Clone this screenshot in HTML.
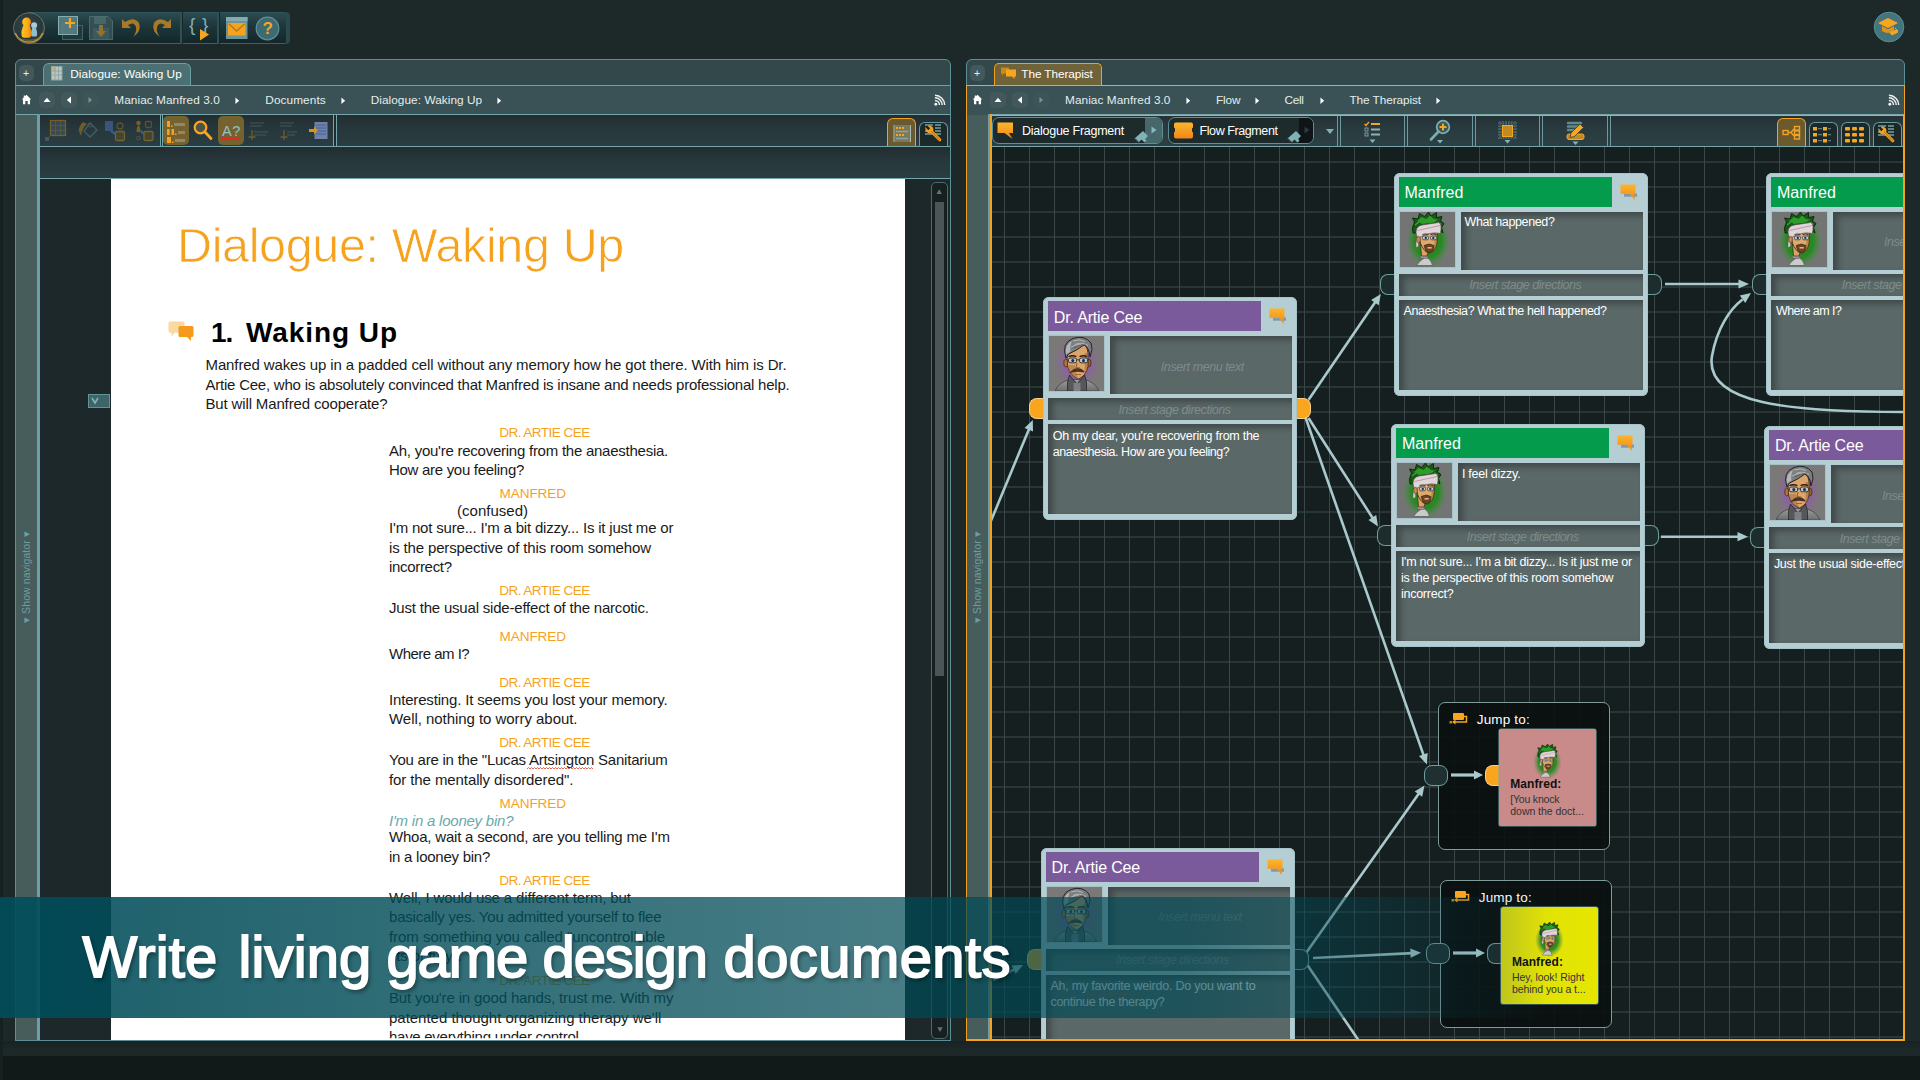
<!DOCTYPE html>
<html lang="en"><head><meta charset="utf-8"><title>Write living game design documents</title>
<style>

html,body{margin:0;padding:0}
body{width:1920px;height:1080px;overflow:hidden;position:relative;background:#1d2829;font-family:"Liberation Sans",sans-serif;}
.t{position:absolute;white-space:pre;}
.abs{position:absolute}
svg{position:absolute;overflow:visible}
.panel{position:absolute;background:#33484b;border:1px solid #5a9096;border-radius:6px 6px 0 0;box-sizing:border-box}
.crumb{position:absolute;background:#3a5254;}
.navstrip{position:absolute;background:#48605f;}
.tb{position:absolute;background:linear-gradient(#2b4347,#1f3235);box-sizing:border-box;border:1px solid #4b7d83;}
.sq{position:absolute;width:15px;height:15px;border-radius:5px;background:#42585b;}
.node{position:absolute;width:254px;height:223px;background:#b5ced3;border-radius:6px;box-shadow:0 0 0 1px #a6c3c8 inset}
.node .hd{position:absolute;left:5px;top:4px;width:213px;height:30px}
.node .pt{position:absolute;left:6px;top:39px;width:55px;height:55px;background:#727574;overflow:hidden;box-shadow:0 0 0 1px rgba(160,185,190,.6)}
.ib{position:absolute;background:#5b6868;box-shadow:inset 5px 4px 6px rgba(0,0,0,.3)}
.pin{position:absolute;width:14px;height:21px;box-sizing:border-box}
.pin.o{background:#f9a51e;border:1px solid #fbd08a}
.pin.d{background:#1d2c2d;border:1px solid #6d9ea0}
.pin.l{border-radius:8px 0 0 8px;border-right:none}
.pin.r{border-radius:0 8px 8px 0;border-left:none}
.jump{position:absolute;background:rgba(10,15,15,.9);border:1px solid #7e9a9b;border-radius:7px;box-sizing:border-box}

</style></head>
<body>
<div style="position:absolute;left:0px;top:1041px;width:1920px;height:15px;background:linear-gradient(#182223,#1d2829 60%)"></div>
<div style="position:absolute;left:0px;top:1056px;width:1920px;height:24px;background:#111919"></div>
<div style="position:absolute;left:0px;top:0px;width:3px;height:1080px;background:#172021"></div>
<div style="position:absolute;left:28px;top:12px;width:259px;height:32px;background:linear-gradient(#2c4c51,#1d363a 45%,#14272a);border-bottom:1px solid #3b6266;border-top:1px solid #33555a;box-sizing:border-box;border-radius:0 3px 3px 0"></div>
<div style="position:absolute;left:286px;top:12px;width:4px;height:32px;background:#2b4a4e;border-radius:0 4px 4px 0"></div>
<div style="position:absolute;left:180px;top:12px;width:2px;height:32px;background:#2f5156"></div>
<div style="position:absolute;left:182px;top:12px;width:1px;height:32px;background:#15272a"></div>
<div style="position:absolute;left:217px;top:12px;width:2px;height:32px;background:#2f5156"></div>
<div style="position:absolute;left:219px;top:12px;width:1px;height:32px;background:#15272a"></div>
<svg style="left:12px;top:11px" width="34" height="34" viewBox="0 0 34 34">
<defs><radialGradient id="lg" cx="45%" cy="40%" r="60%"><stop offset="0" stop-color="#34474a"/><stop offset=".75" stop-color="#27383b"/><stop offset="1" stop-color="#4a4631"/></radialGradient>
<linearGradient id="lo" x1="0" y1="0" x2="1" y2="0"><stop offset="0" stop-color="#ffc21c"/><stop offset=".55" stop-color="#fbb016"/><stop offset="1" stop-color="#ee8413"/></linearGradient></defs>
<circle cx="17" cy="17.200" r="15.500" fill="url(#lg)" stroke="#85897a" stroke-width=".9" stroke-opacity=".75"/>
<path d="M3.200 22 A15 15 0 0 0 30.800 22" fill="none" stroke="#d9a440" stroke-width="1.400" opacity=".9"/>
<path d="M6 27 Q17 33 28 27 Q17 30.500 6 27Z" fill="#b98a2e" opacity=".55"/>
<circle cx="22.100" cy="14.300" r="3" fill="#a6cbdc"/><path d="M20.500 16 Q18.600 21 19.200 24.500 Q19.500 25.600 20.500 25.600 L23.800 25.600 Q24.800 25.600 25 24.500 Q25.600 21 23.700 16 Z" fill="#94bccf"/>
<circle cx="14.600" cy="10.900" r="4.400" fill="url(#lo)"/><path d="M12 13 Q8.500 20 9.700 25 Q10 26.800 12 26.800 L16.800 26.800 Q18.800 26.800 19 25 Q20 20 17.200 13 Z" fill="url(#lo)"/>
</svg>
<svg style="left:57px;top:15px" width="28" height="26" viewBox="0 0 28 26">
<rect x="5.5" y="10.5" width="20" height="14" fill="#22393c" stroke="#3f6266"/>
<rect x="1" y="1" width="20" height="19" fill="#5d8487" opacity=".85"/><rect x="1.5" y="1.5" width="19" height="18" fill="none" stroke="#86aeb0"/>
<path d="M13 3 V13 M8 8 H18" stroke="#f8a51f" stroke-width="2.2"/></svg>
<svg style="left:88px;top:15px" width="26" height="26" viewBox="0 0 26 26" opacity=".8">
<path d="M1.5 1.5 H20 L24.5 6 V24.5 H1.5 Z" fill="#3a5558" stroke="#54777a"/>
<rect x="6" y="2" width="12" height="7" fill="#4f7073"/><rect x="5" y="13" width="16" height="11" fill="#456568"/>
<path d="M11 10 h4 v6 h3 l-5 6 l-5 -6 h3 z" fill="#b5802a"/></svg>
<svg style="left:120px;top:17px" width="22" height="22" viewBox="0 0 22 22">
<path d="M2 2 V11 H11 L8 8 Q14 4 16 10 Q17 15 13 20 Q22 14 19 6 Q14 -1 5 5 Z" fill="#a87a28"/></svg>
<svg style="left:151px;top:17px" width="22" height="22" viewBox="0 0 22 22">
<path d="M20 2 V11 H11 L14 8 Q8 4 6 10 Q5 15 9 20 Q0 14 3 6 Q8 -1 17 5 Z" fill="#a87a28"/></svg>
<div class="t " style="left:189px;top:15.42px;line-height:19px;font-size:19px;color:#7fb0b3;letter-spacing:0.672px;">{ }</div>
<svg style="left:199px;top:29px" width="11" height="12" viewBox="0 0 11 12"><path d="M1 0 L10 5.5 L1 11.5 Z" fill="#f8a51f"/></svg>
<svg style="left:226px;top:17px" width="22" height="23" viewBox="0 0 22 23">
<rect x="0" y="0" width="21.5" height="22" fill="#6b9598"/><rect x="0" y="0" width="21.5" height="4" fill="#83acae"/>
<rect x="2" y="6" width="17.5" height="12.5" fill="#f5a31f"/><path d="M3 7 L10.7 14 L18.5 7" fill="none" stroke="#b37818" stroke-width="1.3"/></svg>
<svg style="left:255px;top:16px" width="25" height="25" viewBox="0 0 25 25"><circle cx="12.5" cy="12.5" r="11.3" fill="#3e6a72" stroke="#5f9197" stroke-width="1.2"/></svg>
<div class="t " style="left:262.5px;top:19.61px;line-height:17px;font-size:17px;font-weight:bold;color:#f8a51f;">?</div>
<svg style="left:1873px;top:11px" width="32" height="32" viewBox="0 0 32 32"><circle cx="16" cy="16" r="14.8" fill="#45747c" stroke="#5d8f97" stroke-width="1"/>
<path d="M5 12 L15 7 L25 12 L15 17 Z" fill="#f8a51f"/><path d="M9 15 V20 Q15 24 21 20 V15 L15 18.2 Z" fill="#e0931a"/>
<path d="M17 22 l6 -3 l2 2 l-6 3 z M22 17 l3 3" fill="#f8a51f" stroke="#f8a51f"/></svg>
<div class="panel" style="left:15px;top:59px;width:936px;height:982px"></div>
<div class="sq" style="left:19px;top:65px;width:15px;height:16px"></div>
<div class="t " style="left:23px;top:67.61px;line-height:10.5px;font-size:10.5px;color:#e8f0f0;">+</div>
<div style="position:absolute;left:43px;top:63px;width:148px;height:23px;background:#4b6f72;border:1px solid #6a9fa3;border-bottom:none;border-radius:6px 6px 0 0;box-sizing:border-box"></div>
<svg style="left:51px;top:66px" width="12" height="15" viewBox="0 0 12 15"><rect x="0.5" y="0.5" width="10.5" height="13.5" fill="#b9c8c4" stroke="#8fa5a2"/><rect x="1.5" y="1.5" width="3" height="3" fill="#f8a51f"/><path d="M4 1 V14 M7.5 1 V14 M1 5 H11 M1 9 H11" stroke="#8aa09c" stroke-width=".8"/></svg>
<div class="t " style="left:70.3px;top:69.01px;line-height:11.8px;font-size:11.8px;color:#fff;letter-spacing:0.058px;">Dialogue: Waking Up</div>
<div style="position:absolute;left:16px;top:85px;width:934px;height:30px;background:#3a5255;border-top:1px solid #6ea0a5;border-bottom:1px solid #76a5aa;box-sizing:border-box"></div>
<svg style="left:20.5px;top:94px" width="11" height="11" viewBox="0 0 14 14"><path d="M7 1 L13 7 H11.5 V13 H8.5 V9 H5.5 V13 H2.5 V7 H1 L3.5 4.5 V2 H5 V3 Z" fill="#fff"/></svg>
<div class="sq" style="left:39px;top:92px;width:16px;height:16px;opacity:1"></div>
<svg style="left:39px;top:92px" width="16" height="16" viewBox="0 0 16 16"><path d="M4.500 10 L8 5.800 L11.500 10 Z" fill="#fff" opacity="1"/></svg>
<div class="sq" style="left:61px;top:92px;width:16px;height:16px;opacity:1"></div>
<svg style="left:61px;top:92px" width="16" height="16" viewBox="0 0 16 16"><path d="M10 4.500 L5.800 8 L10 11.500 Z" fill="#fff" opacity="1"/></svg>
<div class="sq" style="left:82px;top:92px;width:16px;height:16px;opacity:0.5"></div>
<svg style="left:82px;top:92px" width="16" height="16" viewBox="0 0 16 16"><path d="M6.500 5 L10 8 L6.500 11 Z" fill="#fff" opacity="0.35"/></svg>
<div class="t " style="left:114.3px;top:95.01px;line-height:11.8px;font-size:11.8px;color:#e4eeee;letter-spacing:0.069px;">Maniac Manfred 3.0</div>
<svg style="left:234.8px;top:96.800px" width="5" height="7.400" viewBox="0 0 6 9"><path d="M0.5 0.5 L5 4.5 L0.5 8.5 Z" fill="#fff"/></svg>
<div class="t " style="left:265.3px;top:95.01px;line-height:11.8px;font-size:11.8px;color:#e4eeee;letter-spacing:0.092px;">Documents</div>
<svg style="left:340.8px;top:96.800px" width="5" height="7.400" viewBox="0 0 6 9"><path d="M0.5 0.5 L5 4.5 L0.5 8.5 Z" fill="#fff"/></svg>
<div class="t " style="left:370.7px;top:95.01px;line-height:11.8px;font-size:11.8px;color:#e4eeee;letter-spacing:0.058px;">Dialogue: Waking Up</div>
<svg style="left:496.8px;top:96.800px" width="5" height="7.400" viewBox="0 0 6 9"><path d="M0.5 0.5 L5 4.5 L0.5 8.5 Z" fill="#fff"/></svg>
<svg style="left:933.5px;top:94.5px" width="11" height="11" viewBox="0 0 12 12" opacity=".92"><circle cx="2" cy="10" r="1.6" fill="#fff"/><path d="M1 6 A5 5 0 0 1 6 11 M1 3 A8 8 0 0 1 9 11 M1 0.3 A10.7 10.7 0 0 1 11.7 11" fill="none" stroke="#fff" stroke-width="1.6"/></svg>
<div style="position:absolute;left:16px;top:115px;width:21px;height:925px;background:#465d5c"></div>
<div style="position:absolute;left:36.5px;top:114px;width:3px;height:926px;background:#6c9dab"></div>
<div class="t " style="left:20.5px;top:623.11px;line-height:10.5px;font-size:10.5px;color:#6d9ca3;letter-spacing:0.099px;transform-origin:0 0;transform:rotate(-90deg);">▾ Show navigator ▾</div>
<div style="position:absolute;left:40px;top:115px;width:910px;height:32px;background:linear-gradient(#222d31,#27383c 45%,#2a3d42)"></div>
<div style="position:absolute;left:160px;top:115px;width:1px;height:31px;background:#76a5aa"></div>
<div style="position:absolute;left:162px;top:115px;width:1px;height:31px;background:#76a5aa"></div>
<div style="position:absolute;left:333px;top:115px;width:1px;height:31px;background:#76a5aa"></div>
<div style="position:absolute;left:336px;top:115px;width:1px;height:31px;background:#76a5aa"></div>
<div style="position:absolute;left:161px;top:115px;width:1px;height:32px;background:#1d2c2e"></div>
<div style="position:absolute;left:334px;top:115px;width:2px;height:32px;background:#1d2c2e"></div>
<svg style="left:44px;top:118px" width="114" height="26" viewBox="0 0 114 26" opacity=".55">
<rect x="6.500" y="2.500" width="15" height="15" fill="#4a5a62" stroke="#b5831f" stroke-width="1.300"/><path d="M11.500 3 V17 M16.500 3 V17 M7 7.500 H21 M7 12.500 H21" stroke="#7a7a55" stroke-width=".8"/><rect x="1" y="19" width="4" height="4" fill="#5d7376"/><path d="M5 19 L7 17" stroke="#5d7376"/>
<g transform="translate(-3 0)"><path d="M42 4 Q35 10 40 18 Q41 10 46 6 Z" fill="#a8792a"/><path d="M49 5 L56 12 L49 19 L43 13 Z" fill="none" stroke="#5d7b80" stroke-width="1.400"/><circle cx="49" cy="7" r="2" fill="none" stroke="#5d7b80"/></g>
<g transform="translate(-5 0)"><rect x="66" y="3" width="8" height="10" fill="#4d6fae"/><circle cx="81" cy="8" r="3" fill="none" stroke="#8a6a2a" stroke-width="1.300"/><path d="M72 13 L78 17" stroke="#4d78b0" stroke-width="2.500"/><rect x="76.500" y="13.500" width="9" height="9" rx="1.500" fill="#5a4f2a" stroke="#b5831f" stroke-width="1.300"/></g>
<g transform="translate(-7.500 0)"><circle cx="102" cy="5" r="2.300" fill="#b5831f"/><path d="M100 14 Q100 9 102 7 Q104 9 104 14 Z" fill="#b5831f"/><rect x="109" y="3.500" width="6" height="6" rx="1.500" fill="none" stroke="#8a6a2a" stroke-width="1.300"/><path d="M104 13 L108 16" stroke="#4d78b0" stroke-width="2.500"/><rect x="107.500" y="13.500" width="9" height="9" rx="1.500" fill="#5a4f2a" stroke="#b5831f" stroke-width="1.300"/><circle cx="102" cy="20" r="1.800" fill="none" stroke="#8a6a2a"/></g>
</svg>
<div style="position:absolute;left:163px;top:116px;width:26px;height:29px;background:#76622f;border-radius:5px"></div>
<div style="position:absolute;left:218px;top:116px;width:26px;height:29px;background:#76622f;border-radius:5px"></div>
<svg style="left:163px;top:116px" width="172" height="29" viewBox="0 0 172 29">
<g fill="#f3a21f"><rect x="4" y="5" width="3" height="6"/><rect x="4" y="13" width="2.600" height="6"/><rect x="8.500" y="13" width="2.600" height="6"/><rect x="4" y="21" width="4" height="6"/><rect x="8" y="9.500" width="1.500" height="1.500"/><rect x="12" y="17.500" width="1.500" height="1.500"/><rect x="9" y="25.500" width="1.500" height="1.500"/></g>
<g fill="#8d8a6a"><rect x="11" y="7" width="11" height="3"/><rect x="15" y="15" width="7" height="3"/><rect x="12" y="23" width="10" height="3"/></g>
<circle cx="37.500" cy="11.500" r="5.800" fill="#4a5548" stroke="#f8a51f" stroke-width="2.200"/><path d="M42 16 L48 22.500" stroke="#f8a51f" stroke-width="2.800" stroke-linecap="round"/>
<path d="M58 23.500 l2 -1.600 l2 1.600 l2 -1.600 l2 1.600 l2 -1.600 l2 1.600 l2 -1.600 l2 1.600 l2 -1.600" fill="none" stroke="#e02626" stroke-width="1.700"/>
<g opacity=".55"><path d="M87 7 h14 M87 10 h12 M91 16 h14 M91 19 h12" stroke="#5d7479" stroke-width="1.200"/><path d="M89 14 V24 M85.500 21 H92.500" stroke="#a87a28" stroke-width="1.300"/></g>
<g opacity=".55"><path d="M117 7 h14 M117 10 h12 M124 16 h10 M124 19 h8" stroke="#5d7479" stroke-width="1.200"/><path d="M121 14 V24 M117.500 21 H124.500" stroke="#a87a28" stroke-width="1.300"/></g>
<rect x="151.500" y="6" width="13" height="17" fill="#7b8fbf" opacity=".85"/><path d="M153 9 h10 M153 12 h10 M153 15 h10 M153 18 h10" stroke="#4a5f96" stroke-width="1"/><path d="M146 13 h5 v-2.500 l4 4 l-4 4 v-2.500 h-5 z" fill="#d8921f"/>
</svg>
<div class="t " style="left:222px;top:124.23px;line-height:14.5px;font-size:14.5px;color:#8fc0c6;letter-spacing:0.625px;">A?</div>
<div style="position:absolute;left:887px;top:118px;width:29px;height:29px;background:#6b5a2e;border:1.500px solid #f5a11f;border-bottom:none;border-radius:6px 6px 0 0;box-sizing:border-box"></div>
<div style="position:absolute;left:919px;top:122px;width:29px;height:25px;background:#1b292b;border:1px solid #6a9a9e;border-bottom:none;border-radius:6px 6px 0 0;box-sizing:border-box"></div>
<svg style="left:887px;top:118px" width="62" height="29" viewBox="0 0 62 29">
<rect x="7.500" y="7" width="16" height="17" fill="#7d8672" opacity=".7"/><path d="M7 7 V24 M23.500 7 V24" stroke="#aab8b0" stroke-width="1"/><path d="M9 10 h9 M9 17 h8" stroke="#f8a51f" stroke-width="1.800" stroke-dasharray="2 1"/><path d="M9 13.500 h12 M9 20.500 h12" stroke="#8fa5a2" stroke-width="1.300"/>
<path d="M38 7 h8 M48 7 h6 M38 10 h8 M48 10 h6 M38 13 h8 M48 13 h6 M38 16 h8 M48 16 h6" stroke="#7b9ea2" stroke-width="1.300"/><g transform="translate(42.500,11.500) rotate(-45)"><rect x="-1.500" y="1" width="3" height="15" rx="1.300" fill="#f0a020"/><circle r="3.700" fill="#f3a21f"/><rect x="-1.300" y="-4.500" width="2.600" height="4.200" fill="#1b292b"/><rect x="-.5" y="2" width="1" height="13" fill="#c07a10"/></g>
</svg>
<div style="position:absolute;left:40px;top:146px;width:910px;height:1px;background:#76a5aa"></div>
<div style="position:absolute;left:40px;top:147px;width:910px;height:31px;background:linear-gradient(#222d31,#27383c 45%,#2a3d41)"></div>
<div style="position:absolute;left:40px;top:178px;width:910px;height:1px;background:#76a5aa"></div>
<div style="position:absolute;left:40px;top:179px;width:910px;height:861px;background:#1c2829"></div>
<div style="position:absolute;left:111px;top:179px;width:794px;height:861px;background:#fff"></div>
<div style="position:absolute;left:88px;top:394px;width:22px;height:14px;background:#3d6468;border:1px solid #5f9499;box-sizing:border-box"></div>
<svg style="left:91px;top:397px" width="8" height="8" viewBox="0 0 8 8"><path d="M1 1 L4 6 L7 1" fill="none" stroke="#7fb5ba" stroke-width="1.600"/></svg>
<div style="position:absolute;left:931px;top:182px;width:17px;height:856.5px;background:#162021;border:1px solid #4e6a6c;border-radius:5px;box-sizing:border-box"></div>
<div style="position:absolute;left:935px;top:202px;width:9px;height:474px;background:#4b5557"></div>
<svg style="left:936.300px;top:188.500px" width="6.400" height="5.400" viewBox="0 0 9 8"><path d="M0.500 7.500 L4.500 0.500 L8.500 7.500 Z" fill="#687274"/></svg>
<svg style="left:936.500px;top:1026.500px" width="6" height="5.400" viewBox="0 0 9 8"><path d="M0.500 0.500 L4.500 7.500 L8.500 0.500 Z" fill="#687274"/></svg>
<div class="t " style="left:177px;top:221.44px;line-height:48.5px;font-size:48.5px;color:#f5a21f;letter-spacing:-0.358px;-webkit-text-stroke:.75px #fff;">Dialogue: Waking Up</div>
<svg style="left:168px;top:320px" width="28" height="22" viewBox="0 0 28 22"><path d="M2 1.500 h13 a1.500 1.500 0 0 1 1.500 1.500 v8 a1.500 1.500 0 0 1 -1.500 1.500 h-8 l-3.500 4 v-4 h-1.500 a1.500 1.500 0 0 1 -1.500 -1.500 v-8 a1.500 1.500 0 0 1 1.500 -1.500z" fill="#f9d9a0"/><path d="M12 6 h12 a1.500 1.500 0 0 1 1.500 1.500 v8 a1.500 1.500 0 0 1 -1.500 1.500 h-1 v4 l-4 -4 h-7 a1.500 1.500 0 0 1 -1.500 -1.500 v-8 a1.500 1.500 0 0 1 1.500 -1.500z" fill="#f59a1c"/></svg>
<div class="t " style="left:211px;top:318.80px;line-height:28px;font-size:28px;font-weight:bold;color:#000;letter-spacing:-1.180px;">1.</div>
<div class="t " style="left:246px;top:318.80px;line-height:28px;font-size:28px;font-weight:bold;color:#000;letter-spacing:0.931px;">Waking Up</div>
<div class="t " style="left:205.5px;top:357.30px;line-height:15px;font-size:15px;color:#1a1a1a;letter-spacing:-0.118px;">Manfred wakes up in a padded cell without any memory how he got there. With him is Dr.</div>
<div class="t " style="left:205.5px;top:376.80px;line-height:15px;font-size:15px;color:#1a1a1a;letter-spacing:-0.228px;">Artie Cee, who is absolutely convinced that Manfred is insane and needs professional help.</div>
<div class="t " style="left:205.5px;top:396.30px;line-height:15px;font-size:15px;color:#1a1a1a;letter-spacing:-0.146px;">But will Manfred cooperate?</div>
<div class="t " style="left:499.2px;top:426.49px;line-height:13.6px;font-size:13.6px;color:#f5a21f;letter-spacing:-0.573px;">DR. ARTIE CEE</div>
<div class="t " style="left:389px;top:442.60px;line-height:15px;font-size:15px;color:#1a1a1a;letter-spacing:-0.249px;">Ah, you're recovering from the anaesthesia.</div>
<div class="t " style="left:389px;top:462.00px;line-height:15px;font-size:15px;color:#1a1a1a;letter-spacing:-0.296px;">How are you feeling?</div>
<div class="t " style="left:499.5px;top:486.79px;line-height:13.6px;font-size:13.6px;color:#f5a21f;letter-spacing:-0.103px;">MANFRED</div>
<div class="t " style="left:457px;top:503.10px;line-height:15px;font-size:15px;color:#1a1a1a;letter-spacing:0.013px;">(confused)</div>
<div class="t " style="left:389px;top:520.30px;line-height:15px;font-size:15px;color:#1a1a1a;letter-spacing:-0.188px;">I'm not sure... I'm a bit dizzy... Is it just me or</div>
<div class="t " style="left:389px;top:539.80px;line-height:15px;font-size:15px;color:#1a1a1a;letter-spacing:-0.149px;">is the perspective of this room somehow</div>
<div class="t " style="left:389px;top:559.00px;line-height:15px;font-size:15px;color:#1a1a1a;letter-spacing:-0.316px;">incorrect?</div>
<div class="t " style="left:499.2px;top:584.29px;line-height:13.6px;font-size:13.6px;color:#f5a21f;letter-spacing:-0.573px;">DR. ARTIE CEE</div>
<div class="t " style="left:389px;top:600.30px;line-height:15px;font-size:15px;color:#1a1a1a;letter-spacing:-0.198px;">Just the usual side-effect of the narcotic.</div>
<div class="t " style="left:499.5px;top:630.19px;line-height:13.6px;font-size:13.6px;color:#f5a21f;letter-spacing:-0.103px;">MANFRED</div>
<div class="t " style="left:389px;top:645.60px;line-height:15px;font-size:15px;color:#1a1a1a;letter-spacing:-0.516px;">Where am I?</div>
<div class="t " style="left:499.2px;top:675.99px;line-height:13.6px;font-size:13.6px;color:#f5a21f;letter-spacing:-0.573px;">DR. ARTIE CEE</div>
<div class="t " style="left:389px;top:692.30px;line-height:15px;font-size:15px;color:#1a1a1a;letter-spacing:-0.167px;">Interesting. It seems you lost your memory.</div>
<div class="t " style="left:389px;top:711.00px;line-height:15px;font-size:15px;color:#1a1a1a;letter-spacing:-0.046px;">Well, nothing to worry about.</div>
<div class="t " style="left:499.2px;top:736.29px;line-height:13.6px;font-size:13.6px;color:#f5a21f;letter-spacing:-0.573px;">DR. ARTIE CEE</div>
<div class="t " style="left:389px;top:752.00px;line-height:15px;font-size:15px;color:#1a1a1a;letter-spacing:-0.227px;">You are in the "Lucas Artsington Sanitarium</div>
<svg style="left:527px;top:767px" width="68" height="3" viewBox="0 0 68 3"><path d="M0 2 l1.500 -1.500 l1.500 1.500 l1.500 -1.500 l1.500 1.500 l1.500 -1.500 l1.500 1.500 l1.500 -1.500 l1.500 1.500 l1.500 -1.500 l1.500 1.500 l1.500 -1.500 l1.500 1.500 l1.500 -1.500 l1.500 1.500 l1.500 -1.500 l1.500 1.500 l1.500 -1.500 l1.500 1.500 l1.500 -1.500 l1.500 1.500 l1.500 -1.500 l1.500 1.500 l1.500 -1.500 l1.500 1.500 l1.500 -1.500 l1.500 1.500 l1.500 -1.500 l1.500 1.500 l1.500 -1.500 l1.500 1.500 l1.500 -1.500 l1.500 1.500 l1.500 -1.500 l1.500 1.500 l1.500 -1.500 l1.500 1.500 l1.500 -1.500 l1.500 1.500 l1.500 -1.500 l1.500 1.500 l1.500 -1.500 l1.500 1.500 l1.500 -1.500 l1.500 1.500" fill="none" stroke="#e0402a" stroke-width=".8"/></svg>
<div class="t " style="left:389px;top:771.50px;line-height:15px;font-size:15px;color:#1a1a1a;letter-spacing:-0.096px;">for the mentally disordered".</div>
<div class="t " style="left:499.5px;top:796.79px;line-height:13.6px;font-size:13.6px;color:#f5a21f;letter-spacing:-0.103px;">MANFRED</div>
<div class="t " style="left:389px;top:812.60px;line-height:15px;font-size:15px;font-style:italic;color:#6aa9aa;letter-spacing:-0.224px;">I'm in a looney bin?</div>
<div class="t " style="left:389px;top:829.30px;line-height:15px;font-size:15px;color:#1a1a1a;letter-spacing:-0.209px;">Whoa, wait a second, are you telling me I'm</div>
<div class="t " style="left:389px;top:848.60px;line-height:15px;font-size:15px;color:#1a1a1a;letter-spacing:-0.256px;">in a looney bin?</div>
<div class="t " style="left:499.2px;top:874.29px;line-height:13.6px;font-size:13.6px;color:#f5a21f;letter-spacing:-0.573px;">DR. ARTIE CEE</div>
<div class="t " style="left:389px;top:889.80px;line-height:15px;font-size:15px;color:#1a1a1a;letter-spacing:-0.135px;">Well, I would use a different term, but</div>
<div class="t " style="left:389px;top:909.00px;line-height:15px;font-size:15px;color:#1a1a1a;letter-spacing:-0.217px;">basically yes. You admitted yourself to flee</div>
<div class="t " style="left:389px;top:928.60px;line-height:15px;font-size:15px;color:#1a1a1a;letter-spacing:-0.048px;">from something you called "uncontrollable</div>
<div class="t " style="left:389px;top:948.00px;line-height:15px;font-size:15px;color:#1a1a1a;letter-spacing:-0.108px;">fits of fury".</div>
<div class="t " style="left:499.2px;top:974.29px;line-height:13.6px;font-size:13.6px;color:#f5a21f;letter-spacing:-0.573px;">DR. ARTIE CEE</div>
<div class="t " style="left:389px;top:989.80px;line-height:15px;font-size:15px;color:#1a1a1a;letter-spacing:-0.144px;">But you're in good hands, trust me. With my</div>
<div class="t " style="left:389px;top:1009.80px;line-height:15px;font-size:15px;color:#1a1a1a;letter-spacing:-0.019px;">patented thought organizing therapy we'll</div>
<div class="t " style="left:389px;top:1028.80px;line-height:15px;font-size:15px;color:#1a1a1a;letter-spacing:-0.277px;clip-path:inset(0 0 5.5px 0);">have everything under control.</div>
<div style="position:absolute;left:15px;top:1040px;width:936px;height:1px;background:#5a9096"></div>
<div class="panel" style="left:966px;top:59px;width:939px;height:982px"></div>
<div class="sq" style="left:970px;top:65px;width:15px;height:16px"></div>
<div class="t " style="left:974px;top:67.61px;line-height:10.5px;font-size:10.5px;color:#e8f0f0;">+</div>
<div style="position:absolute;left:994px;top:62.5px;width:107.5px;height:23.5px;background:#70633a;border:1.500px solid #f0a020;border-bottom:none;border-radius:5px 5px 0 0;box-sizing:border-box"></div>
<svg style="left:1000px;top:67px" width="17" height="13" viewBox="0 0 17 13"><path d="M1 0.500 h8 v6 h-5 l-2 2 v-2 h-1 z" fill="#c98a1c"/><path d="M6 2.500 h10 v7 h-1.500 v2.500 l-2.500 -2.500 h-6 z" fill="#f8a51f"/></svg>
<div class="t " style="left:1021.3px;top:69.31px;line-height:11.8px;font-size:11.8px;color:#fff;letter-spacing:-0.083px;">The Therapist</div>
<div style="position:absolute;left:966px;top:85px;width:939px;height:956px;border:1.500px solid #f5a21f;box-sizing:border-box;background:#3a5255"></div>
<svg style="left:971.5px;top:94px" width="11" height="11" viewBox="0 0 14 14"><path d="M7 1 L13 7 H11.5 V13 H8.5 V9 H5.5 V13 H2.5 V7 H1 L3.5 4.5 V2 H5 V3 Z" fill="#fff"/></svg>
<div class="sq" style="left:990px;top:92px;width:16px;height:16px;opacity:1"></div>
<svg style="left:990px;top:92px" width="16" height="16" viewBox="0 0 16 16"><path d="M4.500 10 L8 5.800 L11.500 10 Z" fill="#fff" opacity="1"/></svg>
<div class="sq" style="left:1012px;top:92px;width:16px;height:16px;opacity:1"></div>
<svg style="left:1012px;top:92px" width="16" height="16" viewBox="0 0 16 16"><path d="M10 4.500 L5.800 8 L10 11.500 Z" fill="#fff" opacity="1"/></svg>
<div class="sq" style="left:1033px;top:92px;width:16px;height:16px;opacity:0.5"></div>
<svg style="left:1033px;top:92px" width="16" height="16" viewBox="0 0 16 16"><path d="M6.500 5 L10 8 L6.500 11 Z" fill="#fff" opacity="0.35"/></svg>
<div class="t " style="left:1065px;top:95.01px;line-height:11.8px;font-size:11.8px;color:#e4eeee;letter-spacing:0.069px;">Maniac Manfred 3.0</div>
<svg style="left:1185.8px;top:96.800px" width="5" height="7.400" viewBox="0 0 6 9"><path d="M0.5 0.5 L5 4.5 L0.5 8.5 Z" fill="#fff"/></svg>
<div class="t " style="left:1216px;top:95.01px;line-height:11.8px;font-size:11.8px;color:#e4eeee;letter-spacing:-0.105px;">Flow</div>
<svg style="left:1255.3px;top:96.800px" width="5" height="7.400" viewBox="0 0 6 9"><path d="M0.5 0.5 L5 4.5 L0.5 8.5 Z" fill="#fff"/></svg>
<div class="t " style="left:1284.5px;top:95.01px;line-height:11.8px;font-size:11.8px;color:#e4eeee;letter-spacing:-0.332px;">Cell</div>
<svg style="left:1319.8px;top:96.800px" width="5" height="7.400" viewBox="0 0 6 9"><path d="M0.5 0.5 L5 4.5 L0.5 8.5 Z" fill="#fff"/></svg>
<div class="t " style="left:1349.5px;top:95.01px;line-height:11.8px;font-size:11.8px;color:#e4eeee;letter-spacing:-0.083px;">The Therapist</div>
<svg style="left:1436.3px;top:96.800px" width="5" height="7.400" viewBox="0 0 6 9"><path d="M0.5 0.5 L5 4.5 L0.5 8.5 Z" fill="#fff"/></svg>
<svg style="left:1887.5px;top:94.5px" width="11" height="11" viewBox="0 0 12 12" opacity=".92"><circle cx="2" cy="10" r="1.6" fill="#fff"/><path d="M1 6 A5 5 0 0 1 6 11 M1 3 A8 8 0 0 1 9 11 M1 0.3 A10.7 10.7 0 0 1 11.7 11" fill="none" stroke="#fff" stroke-width="1.6"/></svg>
<div style="position:absolute;left:967px;top:115px;width:21px;height:925px;background:#465d5c"></div>
<div style="position:absolute;left:987.5px;top:114px;width:3px;height:926px;background:#6c9dab"></div>
<div class="t " style="left:971.5px;top:623.11px;line-height:10.5px;font-size:10.5px;color:#6d9ca3;letter-spacing:0.099px;transform-origin:0 0;transform:rotate(-90deg);">▾ Show navigator ▾</div>
<div style="position:absolute;left:990px;top:114px;width:914px;height:33px;background:linear-gradient(#232f33,#293b3f 45%,#2c4044)"></div>
<div style="position:absolute;left:990px;top:116px;width:348px;height:31px;border:1px solid #6b9ba0;border-top:none;box-sizing:border-box"></div>
<div style="position:absolute;left:1340px;top:116px;width:65px;height:31px;border:1px solid #6b9ba0;border-top:none;box-sizing:border-box"></div>
<div style="position:absolute;left:1407px;top:116px;width:66px;height:31px;border:1px solid #6b9ba0;border-top:none;box-sizing:border-box"></div>
<div style="position:absolute;left:1475px;top:116px;width:65px;height:31px;border:1px solid #6b9ba0;border-top:none;box-sizing:border-box"></div>
<div style="position:absolute;left:1542px;top:116px;width:66px;height:31px;border:1px solid #6b9ba0;border-top:none;box-sizing:border-box"></div>
<div style="position:absolute;left:1610px;top:116px;width:294px;height:31px;border:1px solid #6b9ba0;border-top:none;box-sizing:border-box;border-right:none"></div>
<div style="position:absolute;left:992px;top:117px;width:171px;height:27px;background:#1d2b2d;border:1px solid #5d8e93;border-radius:7px;box-sizing:border-box;overflow:hidden"><div style="position:absolute;right:0;top:0;width:17px;height:27px;background:#46686b"></div></div>
<div style="position:absolute;left:1168px;top:117px;width:146px;height:27px;background:#1d2b2d;border:1px solid #5d8e93;border-radius:7px;box-sizing:border-box;overflow:hidden"><div style="position:absolute;right:0;top:0;width:14px;height:27px;background:#0f1516"></div></div>
<svg style="left:997px;top:122px" width="17" height="18" viewBox="0 0 17 18"><defs><linearGradient id="og" x1="0" y1="0" x2="0" y2="1"><stop offset="0" stop-color="#fcb62c"/><stop offset="1" stop-color="#f0861a"/></linearGradient></defs><path d="M0.500 0.500 h15.500 v10.500 h-4 l3.500 6 l-8 -6 h-7 z" fill="url(#og)"/></svg>
<svg style="left:1173px;top:122px" width="21" height="17" viewBox="0 0 21 17"><path d="M3 0.500 h15 a2 2 0 0 1 2 2 v3 l-1 1 v3 l1 1 v4 a2 2 0 0 1 -2 2 h-15 a2 2 0 0 1 -2 -2 v-4 l1 -1 v-3 l-1 -1 v-3 a2 2 0 0 1 2 -2z" fill="url(#og)"/></svg>
<div class="t " style="left:1022px;top:125.22px;line-height:12.5px;font-size:12.5px;color:#fff;letter-spacing:-0.254px;">Dialogue Fragment</div>
<div class="t " style="left:1199.5px;top:125.22px;line-height:12.5px;font-size:12.5px;color:#fff;letter-spacing:-0.412px;">Flow Fragment</div>
<svg style="left:1134px;top:128.500px" width="16" height="17" viewBox="0 0 16 17"><path d="M9 2 l5 5 l-3 3 l1.500 1.500 l-2 2 l-3 -3 l-3 3 l-4 -4 z" fill="#7fb3b8"/><path d="M1 10 l4 4" stroke="#2a3f42" stroke-width="1.200"/></svg>
<svg style="left:1287px;top:128.500px" width="16" height="17" viewBox="0 0 16 17"><path d="M9 2 l5 5 l-3 3 l1.500 1.500 l-2 2 l-3 -3 l-3 3 l-4 -4 z" fill="#7fb3b8"/><path d="M1 10 l4 4" stroke="#2a3f42" stroke-width="1.200"/></svg>
<svg style="left:1151px;top:126px" width="6" height="8" viewBox="0 0 6 8"><path d="M0.500 0.500 L5.500 4 L0.500 7.500 Z" fill="#86b9be"/></svg>
<svg style="left:1304px;top:126px" width="6" height="8" viewBox="0 0 6 8"><path d="M0.500 0.500 L5.500 4 L0.500 7.500 Z" fill="#2c3a3b"/></svg>
<svg style="left:1326px;top:129px" width="8" height="5" viewBox="0 0 8 5"><path d="M0 0 H8 L4 5 Z" fill="#7fb3b8"/></svg>
<svg style="left:1362px;top:120px" width="22" height="26" viewBox="0 0 22 26">
<path d="M2.500 4 l1.500 1.500 l3 -3.500" fill="none" stroke="#f8a51f" stroke-width="1.300"/><path d="M9 4 h9" stroke="#f8a51f" stroke-width="2"/>
<rect x="3" y="8" width="3" height="3" fill="none" stroke="#8fb0b3" stroke-width=".8"/><rect x="3" y="13" width="3" height="3" fill="none" stroke="#8fb0b3" stroke-width=".8"/>
<path d="M9 9.500 h9 M9 14.500 h9" stroke="#8fb0b3" stroke-width="2"/><path d="M7.500 19.500 h6 l-3 3.500 z" fill="#7fb3b8"/></svg>
<svg style="left:1428px;top:118px" width="24" height="28" viewBox="0 0 24 28">
<circle cx="15" cy="9" r="6.300" fill="#3b5658" stroke="#79aeb3" stroke-width="1.800"/><path d="M10.500 13.500 L3 21.500" stroke="#79aeb3" stroke-width="2.600" stroke-linecap="round"/><path d="M15 5.500 V12.500 M11.500 9 H18.500" stroke="#f8a51f" stroke-width="2"/><path d="M9 22 h6 l-3 3.500 z" fill="#7fb3b8"/></svg>
<svg style="left:1497px;top:119px" width="22" height="27" viewBox="0 0 22 27">
<path d="M3 2 V20 M6 2 V20 M9 2 V20 M12 2 V20 M15 2 V20 M18 2 V20 M1 4 H20 M1 7 H20 M1 10 H20 M1 13 H20 M1 16 H20 M1 19 H20" stroke="#6fa0a5" stroke-width=".7" stroke-dasharray="1.500 1"/>
<rect x="5.500" y="6.500" width="10" height="11" fill="#c48a22" stroke="#f8a51f"/><path d="M7.500 21 h6 l-3 3.500 z" fill="#7fb3b8"/></svg>
<svg style="left:1563px;top:119px" width="26" height="28" viewBox="0 0 26 28">
<path d="M5 4 h13 M5 7.500 h13 M5 11 h10" stroke="#5f8a8e" stroke-width="2.400" stroke-linecap="round"/>
<rect x="4" y="15" width="17" height="5.500" rx="2" fill="#c48a22" stroke="#f8a51f"/>
<path d="M8 14 l9 -9 l3.500 3.500 l-9 9 l-4.500 1 z" fill="#f8a51f" stroke="#2e4346" stroke-width=".8"/><path d="M9.500 22.500 h6 l-3 3.500 z" fill="#7fb3b8"/></svg>
<div style="position:absolute;left:1777px;top:118px;width:29px;height:29px;background:#6b5a2e;border:1.500px solid #f5a11f;border-bottom:none;border-radius:6px 6px 0 0;box-sizing:border-box"></div>
<div style="position:absolute;left:1809px;top:122px;width:29px;height:25px;background:#1b292b;border:1px solid #6a9a9e;border-bottom:none;border-radius:6px 6px 0 0;box-sizing:border-box"></div>
<div style="position:absolute;left:1841px;top:122px;width:29px;height:25px;background:#1b292b;border:1px solid #6a9a9e;border-bottom:none;border-radius:6px 6px 0 0;box-sizing:border-box"></div>
<div style="position:absolute;left:1873px;top:122px;width:29px;height:25px;background:#1b292b;border:1px solid #6a9a9e;border-bottom:none;border-radius:6px 6px 0 0;box-sizing:border-box"></div>
<svg style="left:1777px;top:118px" width="126" height="29" viewBox="0 0 126 29">
<g fill="none" stroke="#f0a427" stroke-width="1.400"><rect x="6" y="12.500" width="5" height="4"/><path d="M11.500 14.500 h2.500 l3 -3.500 M14 14.500 l3 3.500"/><rect x="17.500" y="8.500" width="5" height="3.500"/><rect x="17.500" y="13" width="5" height="3.500"/><rect x="17.500" y="17.500" width="5" height="3.500"/></g>
<g fill="#f8a51f"><rect x="36" y="9" width="4" height="3.500"/><rect x="46" y="9" width="4" height="3.500"/><rect x="36" y="15" width="4" height="3.500"/><rect x="46" y="15" width="4" height="3.500"/><rect x="36" y="21" width="4" height="3.500"/><rect x="46" y="21" width="4" height="3.500"/>
<rect x="68" y="9" width="5" height="3.500" rx="1"/><rect x="75" y="9" width="5" height="3.500" rx="1"/><rect x="82" y="9" width="5" height="3.500" rx="1"/><rect x="68" y="15" width="5" height="3.500" rx="1"/><rect x="75" y="15" width="5" height="3.500" rx="1"/><rect x="82" y="15" width="5" height="3.500" rx="1"/><rect x="68" y="21" width="5" height="3.500" rx="1"/><rect x="75" y="21" width="5" height="3.500" rx="1"/><rect x="82" y="21" width="5" height="3.500" rx="1"/></g>
<path d="M41 10.700 h4 M51 10.700 h3 M41 16.700 h4 M51 16.700 h3 M41 22.700 h4 M51 22.700 h3" stroke="#6d9095" stroke-width="1"/>
<path d="M101 8 h8 M111 8 h6 M101 11 h8 M111 11 h6 M101 14 h8 M111 14 h6 M101 17 h8 M111 17 h6" stroke="#7b9ea2" stroke-width="1.300"/><g transform="translate(105.500,12.500) rotate(-45)"><rect x="-1.500" y="1" width="3" height="15" rx="1.300" fill="#f0a020"/><circle r="3.700" fill="#f3a21f"/><rect x="-1.300" y="-4.500" width="2.600" height="4.200" fill="#1b292b"/><rect x="-.5" y="2" width="1" height="13" fill="#c07a10"/></g>
</svg>
<div style="position:absolute;left:990px;top:146px;width:914px;height:1px;background:#76a5aa"></div>
<div style="position:absolute;left:990px;top:114px;width:914px;height:1px;background:#76a5aa"></div>
<div style="position:absolute;left:990px;top:115px;width:914px;height:1.4px;background:#f5a21f"></div>
<div style="position:absolute;left:992px;top:147px;width:911px;height:892px;overflow:hidden"><div style="position:absolute;left:0;top:0;width:911px;height:892px;background-color:#161f20;background-image:linear-gradient(90deg,#3a4647 1px,transparent 1px),linear-gradient(#2a3536 2px,transparent 2px);background-size:25px 25px;background-position:12px 0,0 14px"></div>
<div class="jump" style="left:446px;top:555px;width:172px;height:148px"></div><svg style="left:457px;top:565px" width="19" height="14" viewBox="0 0 19 14"><rect x="4" y="1" width="11" height="7" rx="1" fill="#f8a51f"/><path d="M15 4.500 h2.500 v5.500 h-12" fill="none" stroke="#f8a51f" stroke-width="1.500"/><path d="M6.500 7.500 L3 10 L6.500 12.500 Z" fill="#f8a51f"/><rect x="0.500" y="9" width="2.500" height="2.500" fill="#c98512"/></svg><div class="t " style="left:484.8px;top:565.57px;line-height:13.5px;font-size:13.5px;color:#fff;letter-spacing:0.152px;">Jump to:</div><div class="pin d" style="left:431.5px;top:617.5px;width:24px;height:21px;border-radius:8px;background:#1f3032"></div><div class="pin o l" style="left:493.29999999999995px;top:617.5px"></div><div style="position:absolute;left:507.29999999999995px;top:582px;width:96.500px;height:96.500px;background:#c98a8a;border-radius:2px;box-shadow:0 0 0 .6px rgba(120,170,170,.8)"><div style="position:absolute;left:31px;top:15px;width:34px;height:34px"><svg width="34.1" height="34.1" viewBox="0 0 55 55" style="left:0;top:0">
<defs><radialGradient id="mgj582" cx="50%" cy="50%" r="50%"><stop offset="0" stop-color="#1f8a1a"/><stop offset=".6" stop-color="#258a20" stop-opacity=".95"/><stop offset="1" stop-color="#5c8a55" stop-opacity="0"/></radialGradient></defs>
<ellipse cx="28" cy="29" rx="23" ry="28" fill="url(#mgj582)"/>
<path d="M16.500 53.500 Q20 48 24.500 46 L27.500 46 Q31.500 48 32.500 53.500 Z" fill="#cbcbcb" stroke="#4a4a4a" stroke-width=".6"/><rect x="20.500" y="43.300" width="7" height="3" rx="1.200" fill="#b497ad" stroke="#5a4a58" stroke-width=".5"/>
<path d="M20.500 32 L21.500 44 L27 44 L29 37 Z" fill="#dba268" stroke="#3a2410" stroke-width=".7"/>
<path d="M12.500 16 L14.500 10 L12.500 6 L18 7 L19.500 1.500 L24.500 4.500 L28.500 0 L31 4 L36.500 0.500 L36.500 5.500 L42 4.500 L40.500 9 L44 11.500 L41.500 15.500 L43 21 L37.500 17 L17 21 L13 21 Z" fill="#175a16" stroke="#092409" stroke-width=".9"/><path d="M17 9 L21.500 5 L26.500 7 L30 3.500 L34 7 L38 7.500 L34 10.500 L22 12 Z" fill="#2e9c29"/><path d="M15 13 L19 10 M37 10 L41 12" stroke="#37a832" stroke-width="1.200"/>
<path d="M19.500 20 Q19 30 22 34.500 Q25 40.500 30.500 41 Q35.500 39 37 31 L37.500 20 Z" fill="#dfa96c" stroke="#3a2410" stroke-width=".8"/>
<path d="M37 21 L37 31 Q36 36 33.500 39.500 Q35 30 34.500 21 Z" fill="#9a6430" opacity=".5"/>
<path d="M16 21 Q15.500 14.500 22 13 L38.500 10.500 Q41.500 11 41 17.500 L40.500 21.500 Q30 19 17.500 26.500 Z" fill="#dfd6da" stroke="#5a4a50" stroke-width=".7"/><path d="M17.500 18.500 L40 13.500" stroke="#b58a93" stroke-width=".8"/><path d="M16.300 26 l2.300 -.5 l0 9 l-2.800 1 z" fill="#d8cfd3" stroke="#5a4a50" stroke-width=".5"/>
<path d="M24 33.500 Q29.500 30.500 34 33.500 L33.500 38.500 Q30 42 26 39.800 Z" fill="#6b4325" stroke="#3a2410" stroke-width=".6"/><path d="M27.500 35.800 h4.200" stroke="#ecc193" stroke-width="1.400"/>
<rect x="22.500" y="24" width="6" height="3.800" rx="1.400" fill="#c4ced6" stroke="#3b3b3b" stroke-width=".8"/><rect x="30.500" y="24" width="6" height="3.800" rx="1.400" fill="#c4ced6" stroke="#3b3b3b" stroke-width=".8"/><circle cx="25.800" cy="26" r="1.150" fill="#22304a"/><circle cx="33.300" cy="26" r="1.150" fill="#22304a"/>
<path d="M22.500 22.500 Q25.500 21.300 28.500 22.500 M30.500 22.500 Q33.500 21.300 36.500 22.500" stroke="#3a2410" stroke-width=".9" fill="none"/>
<ellipse cx="18.500" cy="27.500" rx="1.900" ry="3.200" fill="#c48e55" stroke="#3a2410" stroke-width=".5"/>
</svg></div><div class="t " style="left:11px;top:49.14px;line-height:12px;font-size:12px;font-weight:bold;color:#111;letter-spacing:0.041px;">Manfred:</div><div class="t " style="left:11px;top:65.11px;line-height:10.5px;font-size:10.5px;color:#333;letter-spacing:-0.198px;">[You knock</div><div class="t " style="left:11px;top:76.81px;line-height:10.5px;font-size:10.5px;color:#333;letter-spacing:-0.040px;">down the doct...</div></div>
<div class="jump" style="left:448px;top:733px;width:172px;height:147.5px"></div><svg style="left:459px;top:743px" width="19" height="14" viewBox="0 0 19 14"><rect x="4" y="1" width="11" height="7" rx="1" fill="#f8a51f"/><path d="M15 4.500 h2.500 v5.500 h-12" fill="none" stroke="#f8a51f" stroke-width="1.500"/><path d="M6.500 7.500 L3 10 L6.500 12.500 Z" fill="#f8a51f"/><rect x="0.500" y="9" width="2.500" height="2.500" fill="#c98512"/></svg><div class="t " style="left:486.8px;top:743.57px;line-height:13.5px;font-size:13.5px;color:#fff;letter-spacing:0.152px;">Jump to:</div><div class="pin d" style="left:433.5px;top:795.5px;width:24px;height:21px;border-radius:8px;background:#1f3032"></div><div class="pin d l" style="left:495px;top:795.5px"></div><div style="position:absolute;left:509px;top:760px;width:96.500px;height:96.500px;background:linear-gradient(90deg,#d0d216,#e2e305 50%,#e6e600);border-radius:2px;box-shadow:0 0 0 .6px rgba(120,170,170,.8)"><div style="position:absolute;left:31px;top:15px;width:34px;height:34px"><svg width="34.1" height="34.1" viewBox="0 0 55 55" style="left:0;top:0">
<defs><radialGradient id="mgj760" cx="50%" cy="50%" r="50%"><stop offset="0" stop-color="#1f8a1a"/><stop offset=".6" stop-color="#258a20" stop-opacity=".95"/><stop offset="1" stop-color="#5c8a55" stop-opacity="0"/></radialGradient></defs>
<ellipse cx="28" cy="29" rx="23" ry="28" fill="url(#mgj760)"/>
<path d="M16.500 53.500 Q20 48 24.500 46 L27.500 46 Q31.500 48 32.500 53.500 Z" fill="#cbcbcb" stroke="#4a4a4a" stroke-width=".6"/><rect x="20.500" y="43.300" width="7" height="3" rx="1.200" fill="#b497ad" stroke="#5a4a58" stroke-width=".5"/>
<path d="M20.500 32 L21.500 44 L27 44 L29 37 Z" fill="#dba268" stroke="#3a2410" stroke-width=".7"/>
<path d="M12.500 16 L14.500 10 L12.500 6 L18 7 L19.500 1.500 L24.500 4.500 L28.500 0 L31 4 L36.500 0.500 L36.500 5.500 L42 4.500 L40.500 9 L44 11.500 L41.500 15.500 L43 21 L37.500 17 L17 21 L13 21 Z" fill="#175a16" stroke="#092409" stroke-width=".9"/><path d="M17 9 L21.500 5 L26.500 7 L30 3.500 L34 7 L38 7.500 L34 10.500 L22 12 Z" fill="#2e9c29"/><path d="M15 13 L19 10 M37 10 L41 12" stroke="#37a832" stroke-width="1.200"/>
<path d="M19.500 20 Q19 30 22 34.500 Q25 40.500 30.500 41 Q35.500 39 37 31 L37.500 20 Z" fill="#dfa96c" stroke="#3a2410" stroke-width=".8"/>
<path d="M37 21 L37 31 Q36 36 33.500 39.500 Q35 30 34.500 21 Z" fill="#9a6430" opacity=".5"/>
<path d="M16 21 Q15.500 14.500 22 13 L38.500 10.500 Q41.500 11 41 17.500 L40.500 21.500 Q30 19 17.500 26.500 Z" fill="#dfd6da" stroke="#5a4a50" stroke-width=".7"/><path d="M17.500 18.500 L40 13.500" stroke="#b58a93" stroke-width=".8"/><path d="M16.300 26 l2.300 -.5 l0 9 l-2.800 1 z" fill="#d8cfd3" stroke="#5a4a50" stroke-width=".5"/>
<path d="M24 33.500 Q29.500 30.500 34 33.500 L33.500 38.500 Q30 42 26 39.800 Z" fill="#6b4325" stroke="#3a2410" stroke-width=".6"/><path d="M27.500 35.800 h4.200" stroke="#ecc193" stroke-width="1.400"/>
<rect x="22.500" y="24" width="6" height="3.800" rx="1.400" fill="#c4ced6" stroke="#3b3b3b" stroke-width=".8"/><rect x="30.500" y="24" width="6" height="3.800" rx="1.400" fill="#c4ced6" stroke="#3b3b3b" stroke-width=".8"/><circle cx="25.800" cy="26" r="1.150" fill="#22304a"/><circle cx="33.300" cy="26" r="1.150" fill="#22304a"/>
<path d="M22.500 22.500 Q25.500 21.300 28.500 22.500 M30.500 22.500 Q33.500 21.300 36.500 22.500" stroke="#3a2410" stroke-width=".9" fill="none"/>
<ellipse cx="18.500" cy="27.500" rx="1.900" ry="3.200" fill="#c48e55" stroke="#3a2410" stroke-width=".5"/>
</svg></div><div class="t " style="left:11px;top:49.14px;line-height:12px;font-size:12px;font-weight:bold;color:#111;letter-spacing:0.041px;">Manfred:</div><div class="t " style="left:11px;top:65.11px;line-height:10.5px;font-size:10.5px;color:#333;letter-spacing:-0.053px;">Hey, look! Right</div><div class="t " style="left:11px;top:76.81px;line-height:10.5px;font-size:10.5px;color:#333;letter-spacing:-0.073px;">behind you a t...</div></div>
<svg style="left:0;top:0" width="911" height="892" viewBox="0 0 911 892"><path d="M-1.5 375.0 L37.5 280.9" stroke="#a9c9cd" stroke-width="2.6" fill="none"/><path d="M40.8 273.0 L41.0 284.5 L32.5 280.9 Z" fill="#a9c9cd"/><path d="M316.6 252.7 L384.0 154.0" stroke="#a9c9cd" stroke-width="2.6" fill="none"/><path d="M388.8 147.0 L386.7 158.3 L379.1 153.1 Z" fill="#a9c9cd"/><path d="M316.5 271.0 L381.4 372.2" stroke="#a9c9cd" stroke-width="2.6" fill="none"/><path d="M386.0 379.4 L376.5 373.0 L384.2 368.1 Z" fill="#a9c9cd"/><path d="M313.0 269.0 L432.0 609.4" stroke="#a9c9cd" stroke-width="2.6" fill="none"/><path d="M434.8 617.4 L427.0 609.0 L435.7 606.0 Z" fill="#a9c9cd"/><path d="M673.0 137.0 L748.5 137.0" stroke="#a9c9cd" stroke-width="2.6" fill="none"/><path d="M757.0 137.0 L746.5 141.6 L746.5 132.4 Z" fill="#a9c9cd"/><path d="M669.0 389.7 L747.5 389.7" stroke="#a9c9cd" stroke-width="2.6" fill="none"/><path d="M756.0 389.7 L745.5 394.3 L745.5 385.1 Z" fill="#a9c9cd"/><path d="M314.0 806.0 L427.6 645.4" stroke="#a9c9cd" stroke-width="2.6" fill="none"/><path d="M432.5 638.5 L430.2 649.7 L422.7 644.4 Z" fill="#a9c9cd"/><path d="M321.0 811.0 L420.5 806.1" stroke="#a9c9cd" stroke-width="2.6" fill="none"/><path d="M429.0 805.7 L418.7 810.8 L418.3 801.6 Z" fill="#a9c9cd"/><path d="M314.0 816.0 L375.2 906.0" stroke="#a9c9cd" stroke-width="2.6" fill="none"/><path d="M1.0 833.0 L23.4 821.8" stroke="#a9c9cd" stroke-width="2.6" fill="none"/><path d="M31.0 818.0 L23.7 826.8 L19.6 818.6 Z" fill="#a9c9cd"/><path d="M459.0 628.0 L484.0 628.0" stroke="#a9c9cd" stroke-width="3.2" fill="none"/><path d="M491.0 628.0 L482.0 632.5 L482.0 623.5 Z" fill="#a9c9cd"/><path d="M461.0 806.0 L486.0 806.0" stroke="#a9c9cd" stroke-width="3.2" fill="none"/><path d="M493.0 806.0 L484.0 810.5 L484.0 801.5 Z" fill="#a9c9cd"/><path d="M913 265 C798 265 712 257 720 209 C725 181 738 162 750.5 152.5" stroke="#a9c9cd" stroke-width="2.6" fill="none"/><path d="M759.0 146.0 L753.3 155.9 L747.8 148.5 Z" fill="#a9c9cd"/></svg>
<div class="pin o l" style="left:37.299999999999955px;top:251px"></div><div class="pin o r" style="left:305.29999999999995px;top:251px"></div><div class="node" style="left:51.299999999999955px;top:150px"><div class="hd" style="background:#7a5a9a"></div><div class="t " style="left:10.5px;top:12.76px;line-height:16px;font-size:16px;color:#fff;letter-spacing:-0.169px;">Dr. Artie Cee</div><svg style="left:226px;top:11px" width="18" height="17" viewBox="0 0 18 17"><path d="M4 9.500 h13 v3.200 h-13 z" fill="#6d88a0" opacity=".75"/><path d="M0.500 0.500 h15 v9.300 h-1.200 l.5 6.200 l-5 -6.200 h-9.300 z" fill="url(#og)"/></svg><div class="pt"><svg width="55" height="55" viewBox="0 0 55 55" style="left:0;top:0">
<defs><radialGradient id="pga1" cx="50%" cy="50%" r="50%"><stop offset="0" stop-color="#8f5fa8"/><stop offset=".55" stop-color="#8a62a0" stop-opacity=".9"/><stop offset="1" stop-color="#7c7878" stop-opacity="0"/></radialGradient>
<linearGradient id="pja1" x1="0" y1="0" x2="0" y2="1"><stop offset="0" stop-color="#9a9c9e"/><stop offset="1" stop-color="#6c6e70"/></linearGradient></defs>
<rect width="55" height="55" fill="#7b7878"/>
<ellipse cx="28" cy="27" rx="25" ry="29" fill="url(#pga1)"/>
<path d="M6 55 Q9 47 20 43.500 L36 43.500 Q47 47 50 55 Z" fill="url(#pja1)" stroke="#3c3c3e" stroke-width=".7"/>
<path d="M18.500 55 Q17.500 45 20.500 39 L28 48 L35.500 39 Q38.500 45 37.500 55 Z" fill="#55575a" stroke="#222" stroke-width=".7"/><path d="M24.500 47 h7 v8 h-7z" fill="#7d7f82"/>
<ellipse cx="16.800" cy="27" rx="2" ry="4" fill="#b3763c" stroke="#3a2410" stroke-width=".7"/><ellipse cx="40" cy="27" rx="2" ry="4" fill="#93602f" stroke="#3a2410" stroke-width=".7"/>
<path d="M18 17 Q18 7 28 7 Q38.500 7 39 17 L39 30 Q37.500 39.500 29.500 43 Q21 39.500 18.500 30 Z" fill="#dba56b" stroke="#3a2410" stroke-width=".8"/>
<path d="M18.500 29 Q20.500 39 29.500 43 Q26 36.500 26 29 Z" fill="#a86f35" opacity=".55"/><path d="M39 17 L39 30 Q38 36 35 39.500 Q36.500 30 35.500 17 Z" fill="#8a5a2c" opacity=".45"/>
<path d="M17 22 Q12 7 24 2.500 Q35 -1.500 42 7 Q44.500 13 41 21 Q40.500 12 35 9 Q27 15 19.500 18 Z" fill="#7c7e80" stroke="#1a1a1a" stroke-width=".9"/><path d="M17 18.500 Q15 9 23 5 Q20.500 10.500 21.500 15.500 Z" fill="#b4b6b8"/><path d="M24 5 Q30 2.500 36 5.500 M26 8.500 Q32 5.500 39 9.500 M22 11 Q27 8 32 8.500" stroke="#b9bbbd" stroke-width=".9" fill="none"/><path d="M25 12 Q30 8 37 9" stroke="#4a4c4e" stroke-width=".7" fill="none"/>
<path d="M19.500 20.500 Q23 19 27.500 20.500 M30.500 20.500 Q34.500 19 38 20.500" stroke="#2a1a0e" stroke-width="1.300" fill="none"/>
<rect x="19.500" y="22" width="8" height="4.800" rx="1.600" fill="#b9c6cf" stroke="#2b2b2b" stroke-width=".9"/><rect x="30.500" y="22" width="8" height="4.800" rx="1.600" fill="#b9c6cf" stroke="#2b2b2b" stroke-width=".9"/><path d="M27.500 23.800 h3" stroke="#2b2b2b" stroke-width=".8"/><circle cx="23.800" cy="24.500" r="1.500" fill="#1f2c44"/><circle cx="34.500" cy="24.500" r="1.500" fill="#1f2c44"/>
<path d="M22.500 35.800 Q28.500 30 35 35.800 Q28.500 34.300 22.500 35.800 Z" fill="#5c4030" stroke="#4a3023" stroke-width="1.600"/>
<path d="M28 27 L27 31.800 L30.800 31.800" fill="none" stroke="#8a5a2c" stroke-width="1"/><path d="M26 38.500 h6" stroke="#8a5a2c" stroke-width=".8"/>
</svg></div><div class="ib" style="left:67px;top:39px;width:182px;height:58px"></div><div class="t " style="left:117.5px;top:64.42px;line-height:12.5px;font-size:12.5px;font-style:italic;color:#7e8b8b;letter-spacing:-0.414px;">Insert menu text</div><div class="ib" style="left:5px;top:101px;width:244px;height:22px"></div><div class="t " style="left:75.3px;top:107.42px;line-height:12.5px;font-size:12.5px;font-style:italic;color:#7e8b8b;letter-spacing:-0.448px;">Insert stage directions</div><div class="ib" style="left:5px;top:127px;width:244px;height:90px"></div><div class="t " style="left:9.5px;top:132.72px;line-height:12.5px;font-size:12.5px;color:#fff;letter-spacing:-0.260px;">Oh my dear, you're recovering from the</div><div class="t " style="left:9.5px;top:148.52px;line-height:12.5px;font-size:12.5px;color:#fff;letter-spacing:-0.464px;">anaesthesia. How are you feeling?</div></div>
<div class="pin d l" style="left:388px;top:126.80000000000001px"></div><div class="pin d r" style="left:656px;top:126.80000000000001px"></div><div class="node" style="left:402px;top:25.80000000000001px"><div class="hd" style="background:#049c4c"></div><div class="t " style="left:10.5px;top:11.96px;line-height:16px;font-size:16px;color:#fff;letter-spacing:0.042px;">Manfred</div><svg style="left:226px;top:11px" width="18" height="17" viewBox="0 0 18 17"><path d="M4 9.500 h13 v3.200 h-13 z" fill="#6d88a0" opacity=".75"/><path d="M0.500 0.500 h15 v9.300 h-1.200 l.5 6.200 l-5 -6.200 h-9.300 z" fill="url(#og)"/></svg><div class="pt"><svg width="55" height="55" viewBox="0 0 55 55" style="left:0;top:0">
<defs><radialGradient id="mgm2" cx="50%" cy="50%" r="50%"><stop offset="0" stop-color="#1f8a1a"/><stop offset=".6" stop-color="#258a20" stop-opacity=".95"/><stop offset="1" stop-color="#5c8a55" stop-opacity="0"/></radialGradient></defs>
<ellipse cx="28" cy="29" rx="23" ry="28" fill="url(#mgm2)"/>
<path d="M16.500 53.500 Q20 48 24.500 46 L27.500 46 Q31.500 48 32.500 53.500 Z" fill="#cbcbcb" stroke="#4a4a4a" stroke-width=".6"/><rect x="20.500" y="43.300" width="7" height="3" rx="1.200" fill="#b497ad" stroke="#5a4a58" stroke-width=".5"/>
<path d="M20.500 32 L21.500 44 L27 44 L29 37 Z" fill="#dba268" stroke="#3a2410" stroke-width=".7"/>
<path d="M12.500 16 L14.500 10 L12.500 6 L18 7 L19.500 1.500 L24.500 4.500 L28.500 0 L31 4 L36.500 0.500 L36.500 5.500 L42 4.500 L40.500 9 L44 11.500 L41.500 15.500 L43 21 L37.500 17 L17 21 L13 21 Z" fill="#175a16" stroke="#092409" stroke-width=".9"/><path d="M17 9 L21.500 5 L26.500 7 L30 3.500 L34 7 L38 7.500 L34 10.500 L22 12 Z" fill="#2e9c29"/><path d="M15 13 L19 10 M37 10 L41 12" stroke="#37a832" stroke-width="1.200"/>
<path d="M19.500 20 Q19 30 22 34.500 Q25 40.500 30.500 41 Q35.500 39 37 31 L37.500 20 Z" fill="#dfa96c" stroke="#3a2410" stroke-width=".8"/>
<path d="M37 21 L37 31 Q36 36 33.500 39.500 Q35 30 34.500 21 Z" fill="#9a6430" opacity=".5"/>
<path d="M16 21 Q15.500 14.500 22 13 L38.500 10.500 Q41.500 11 41 17.500 L40.500 21.500 Q30 19 17.500 26.500 Z" fill="#dfd6da" stroke="#5a4a50" stroke-width=".7"/><path d="M17.500 18.500 L40 13.500" stroke="#b58a93" stroke-width=".8"/><path d="M16.300 26 l2.300 -.5 l0 9 l-2.800 1 z" fill="#d8cfd3" stroke="#5a4a50" stroke-width=".5"/>
<path d="M24 33.500 Q29.500 30.500 34 33.500 L33.500 38.500 Q30 42 26 39.800 Z" fill="#6b4325" stroke="#3a2410" stroke-width=".6"/><path d="M27.500 35.800 h4.200" stroke="#ecc193" stroke-width="1.400"/>
<rect x="22.500" y="24" width="6" height="3.800" rx="1.400" fill="#c4ced6" stroke="#3b3b3b" stroke-width=".8"/><rect x="30.500" y="24" width="6" height="3.800" rx="1.400" fill="#c4ced6" stroke="#3b3b3b" stroke-width=".8"/><circle cx="25.800" cy="26" r="1.150" fill="#22304a"/><circle cx="33.300" cy="26" r="1.150" fill="#22304a"/>
<path d="M22.500 22.500 Q25.500 21.300 28.500 22.500 M30.500 22.500 Q33.500 21.300 36.500 22.500" stroke="#3a2410" stroke-width=".9" fill="none"/>
<ellipse cx="18.500" cy="27.500" rx="1.900" ry="3.200" fill="#c48e55" stroke="#3a2410" stroke-width=".5"/>
</svg></div><div class="ib" style="left:67px;top:39px;width:182px;height:58px"></div><div class="t " style="left:70.5px;top:43.22px;line-height:12.5px;font-size:12.5px;color:#fff;letter-spacing:-0.373px;">What happened?</div><div class="ib" style="left:5px;top:101px;width:244px;height:22px"></div><div class="t " style="left:75.3px;top:106.62px;line-height:12.5px;font-size:12.5px;font-style:italic;color:#7e8b8b;letter-spacing:-0.448px;">Insert stage directions</div><div class="ib" style="left:5px;top:127px;width:244px;height:90px"></div><div class="t " style="left:9.5px;top:131.92px;line-height:12.5px;font-size:12.5px;color:#fff;letter-spacing:-0.423px;">Anaesthesia? What the hell happened?</div></div>
<div class="pin d l" style="left:385.4000000000001px;top:378.4px"></div><div class="pin d r" style="left:653.4000000000001px;top:378.4px"></div><div class="node" style="left:399.4000000000001px;top:277.4px"><div class="hd" style="background:#049c4c"></div><div class="t " style="left:10.5px;top:11.96px;line-height:16px;font-size:16px;color:#fff;letter-spacing:0.042px;">Manfred</div><svg style="left:226px;top:11px" width="18" height="17" viewBox="0 0 18 17"><path d="M4 9.500 h13 v3.200 h-13 z" fill="#6d88a0" opacity=".75"/><path d="M0.500 0.500 h15 v9.300 h-1.200 l.5 6.200 l-5 -6.200 h-9.300 z" fill="url(#og)"/></svg><div class="pt"><svg width="55" height="55" viewBox="0 0 55 55" style="left:0;top:0">
<defs><radialGradient id="mgm3" cx="50%" cy="50%" r="50%"><stop offset="0" stop-color="#1f8a1a"/><stop offset=".6" stop-color="#258a20" stop-opacity=".95"/><stop offset="1" stop-color="#5c8a55" stop-opacity="0"/></radialGradient></defs>
<ellipse cx="28" cy="29" rx="23" ry="28" fill="url(#mgm3)"/>
<path d="M16.500 53.500 Q20 48 24.500 46 L27.500 46 Q31.500 48 32.500 53.500 Z" fill="#cbcbcb" stroke="#4a4a4a" stroke-width=".6"/><rect x="20.500" y="43.300" width="7" height="3" rx="1.200" fill="#b497ad" stroke="#5a4a58" stroke-width=".5"/>
<path d="M20.500 32 L21.500 44 L27 44 L29 37 Z" fill="#dba268" stroke="#3a2410" stroke-width=".7"/>
<path d="M12.500 16 L14.500 10 L12.500 6 L18 7 L19.500 1.500 L24.500 4.500 L28.500 0 L31 4 L36.500 0.500 L36.500 5.500 L42 4.500 L40.500 9 L44 11.500 L41.500 15.500 L43 21 L37.500 17 L17 21 L13 21 Z" fill="#175a16" stroke="#092409" stroke-width=".9"/><path d="M17 9 L21.500 5 L26.500 7 L30 3.500 L34 7 L38 7.500 L34 10.500 L22 12 Z" fill="#2e9c29"/><path d="M15 13 L19 10 M37 10 L41 12" stroke="#37a832" stroke-width="1.200"/>
<path d="M19.500 20 Q19 30 22 34.500 Q25 40.500 30.500 41 Q35.500 39 37 31 L37.500 20 Z" fill="#dfa96c" stroke="#3a2410" stroke-width=".8"/>
<path d="M37 21 L37 31 Q36 36 33.500 39.500 Q35 30 34.500 21 Z" fill="#9a6430" opacity=".5"/>
<path d="M16 21 Q15.500 14.500 22 13 L38.500 10.500 Q41.500 11 41 17.500 L40.500 21.500 Q30 19 17.500 26.500 Z" fill="#dfd6da" stroke="#5a4a50" stroke-width=".7"/><path d="M17.500 18.500 L40 13.500" stroke="#b58a93" stroke-width=".8"/><path d="M16.300 26 l2.300 -.5 l0 9 l-2.800 1 z" fill="#d8cfd3" stroke="#5a4a50" stroke-width=".5"/>
<path d="M24 33.500 Q29.500 30.500 34 33.500 L33.500 38.500 Q30 42 26 39.800 Z" fill="#6b4325" stroke="#3a2410" stroke-width=".6"/><path d="M27.500 35.800 h4.200" stroke="#ecc193" stroke-width="1.400"/>
<rect x="22.500" y="24" width="6" height="3.800" rx="1.400" fill="#c4ced6" stroke="#3b3b3b" stroke-width=".8"/><rect x="30.500" y="24" width="6" height="3.800" rx="1.400" fill="#c4ced6" stroke="#3b3b3b" stroke-width=".8"/><circle cx="25.800" cy="26" r="1.150" fill="#22304a"/><circle cx="33.300" cy="26" r="1.150" fill="#22304a"/>
<path d="M22.500 22.500 Q25.500 21.300 28.500 22.500 M30.500 22.500 Q33.500 21.300 36.500 22.500" stroke="#3a2410" stroke-width=".9" fill="none"/>
<ellipse cx="18.500" cy="27.500" rx="1.900" ry="3.200" fill="#c48e55" stroke="#3a2410" stroke-width=".5"/>
</svg></div><div class="ib" style="left:67px;top:39px;width:182px;height:58px"></div><div class="t " style="left:70.5px;top:43.22px;line-height:12.5px;font-size:12.5px;color:#fff;letter-spacing:-0.239px;">I feel dizzy.</div><div class="ib" style="left:5px;top:101px;width:244px;height:22px"></div><div class="t " style="left:75.3px;top:106.62px;line-height:12.5px;font-size:12.5px;font-style:italic;color:#7e8b8b;letter-spacing:-0.448px;">Insert stage directions</div><div class="ib" style="left:5px;top:127px;width:244px;height:90px"></div><div class="t " style="left:9.5px;top:131.92px;line-height:12.5px;font-size:12.5px;color:#fff;letter-spacing:-0.272px;">I'm not sure... I'm a bit dizzy... Is it just me or</div><div class="t " style="left:9.5px;top:147.72px;line-height:12.5px;font-size:12.5px;color:#fff;letter-spacing:-0.270px;">is the perspective of this room somehow</div><div class="t " style="left:9.5px;top:163.52px;line-height:12.5px;font-size:12.5px;color:#fff;letter-spacing:-0.239px;">incorrect?</div></div>
<div class="pin d l" style="left:760.4000000000001px;top:126.80000000000001px"></div><div class="node" style="left:774.4000000000001px;top:25.80000000000001px"><div class="hd" style="background:#049c4c"></div><div class="t " style="left:10.5px;top:11.96px;line-height:16px;font-size:16px;color:#fff;letter-spacing:0.042px;">Manfred</div><svg style="left:226px;top:11px" width="18" height="17" viewBox="0 0 18 17"><path d="M4 9.500 h13 v3.200 h-13 z" fill="#6d88a0" opacity=".75"/><path d="M0.500 0.500 h15 v9.300 h-1.200 l.5 6.200 l-5 -6.200 h-9.300 z" fill="url(#og)"/></svg><div class="pt"><svg width="55" height="55" viewBox="0 0 55 55" style="left:0;top:0">
<defs><radialGradient id="mgm4" cx="50%" cy="50%" r="50%"><stop offset="0" stop-color="#1f8a1a"/><stop offset=".6" stop-color="#258a20" stop-opacity=".95"/><stop offset="1" stop-color="#5c8a55" stop-opacity="0"/></radialGradient></defs>
<ellipse cx="28" cy="29" rx="23" ry="28" fill="url(#mgm4)"/>
<path d="M16.500 53.500 Q20 48 24.500 46 L27.500 46 Q31.500 48 32.500 53.500 Z" fill="#cbcbcb" stroke="#4a4a4a" stroke-width=".6"/><rect x="20.500" y="43.300" width="7" height="3" rx="1.200" fill="#b497ad" stroke="#5a4a58" stroke-width=".5"/>
<path d="M20.500 32 L21.500 44 L27 44 L29 37 Z" fill="#dba268" stroke="#3a2410" stroke-width=".7"/>
<path d="M12.500 16 L14.500 10 L12.500 6 L18 7 L19.500 1.500 L24.500 4.500 L28.500 0 L31 4 L36.500 0.500 L36.500 5.500 L42 4.500 L40.500 9 L44 11.500 L41.500 15.500 L43 21 L37.500 17 L17 21 L13 21 Z" fill="#175a16" stroke="#092409" stroke-width=".9"/><path d="M17 9 L21.500 5 L26.500 7 L30 3.500 L34 7 L38 7.500 L34 10.500 L22 12 Z" fill="#2e9c29"/><path d="M15 13 L19 10 M37 10 L41 12" stroke="#37a832" stroke-width="1.200"/>
<path d="M19.500 20 Q19 30 22 34.500 Q25 40.500 30.500 41 Q35.500 39 37 31 L37.500 20 Z" fill="#dfa96c" stroke="#3a2410" stroke-width=".8"/>
<path d="M37 21 L37 31 Q36 36 33.500 39.500 Q35 30 34.500 21 Z" fill="#9a6430" opacity=".5"/>
<path d="M16 21 Q15.500 14.500 22 13 L38.500 10.500 Q41.500 11 41 17.500 L40.500 21.500 Q30 19 17.500 26.500 Z" fill="#dfd6da" stroke="#5a4a50" stroke-width=".7"/><path d="M17.500 18.500 L40 13.500" stroke="#b58a93" stroke-width=".8"/><path d="M16.300 26 l2.300 -.5 l0 9 l-2.800 1 z" fill="#d8cfd3" stroke="#5a4a50" stroke-width=".5"/>
<path d="M24 33.500 Q29.500 30.500 34 33.500 L33.500 38.500 Q30 42 26 39.800 Z" fill="#6b4325" stroke="#3a2410" stroke-width=".6"/><path d="M27.500 35.800 h4.200" stroke="#ecc193" stroke-width="1.400"/>
<rect x="22.500" y="24" width="6" height="3.800" rx="1.400" fill="#c4ced6" stroke="#3b3b3b" stroke-width=".8"/><rect x="30.500" y="24" width="6" height="3.800" rx="1.400" fill="#c4ced6" stroke="#3b3b3b" stroke-width=".8"/><circle cx="25.800" cy="26" r="1.150" fill="#22304a"/><circle cx="33.300" cy="26" r="1.150" fill="#22304a"/>
<path d="M22.500 22.500 Q25.500 21.300 28.500 22.500 M30.500 22.500 Q33.500 21.300 36.500 22.500" stroke="#3a2410" stroke-width=".9" fill="none"/>
<ellipse cx="18.500" cy="27.500" rx="1.900" ry="3.200" fill="#c48e55" stroke="#3a2410" stroke-width=".5"/>
</svg></div><div class="ib" style="left:67px;top:39px;width:182px;height:58px"></div><div class="t " style="left:117.5px;top:63.62px;line-height:12.5px;font-size:12.5px;font-style:italic;color:#7e8b8b;letter-spacing:-0.414px;">Insert menu text</div><div class="ib" style="left:5px;top:101px;width:244px;height:22px"></div><div class="t " style="left:75.3px;top:106.62px;line-height:12.5px;font-size:12.5px;font-style:italic;color:#7e8b8b;letter-spacing:-0.448px;">Insert stage directions</div><div class="ib" style="left:5px;top:127px;width:244px;height:90px"></div><div class="t " style="left:9.5px;top:131.92px;line-height:12.5px;font-size:12.5px;color:#fff;letter-spacing:-0.551px;">Where am I?</div></div>
<div class="pin d l" style="left:758.4000000000001px;top:380.4px"></div><div class="node" style="left:772.4000000000001px;top:279.4px"><div class="hd" style="background:#7a5a9a"></div><div class="t " style="left:10.5px;top:11.96px;line-height:16px;font-size:16px;color:#fff;letter-spacing:-0.169px;">Dr. Artie Cee</div><svg style="left:226px;top:11px" width="18" height="17" viewBox="0 0 18 17"><path d="M4 9.500 h13 v3.200 h-13 z" fill="#6d88a0" opacity=".75"/><path d="M0.500 0.500 h15 v9.300 h-1.200 l.5 6.200 l-5 -6.200 h-9.300 z" fill="url(#og)"/></svg><div class="pt"><svg width="55" height="55" viewBox="0 0 55 55" style="left:0;top:0">
<defs><radialGradient id="pga5" cx="50%" cy="50%" r="50%"><stop offset="0" stop-color="#8f5fa8"/><stop offset=".55" stop-color="#8a62a0" stop-opacity=".9"/><stop offset="1" stop-color="#7c7878" stop-opacity="0"/></radialGradient>
<linearGradient id="pja5" x1="0" y1="0" x2="0" y2="1"><stop offset="0" stop-color="#9a9c9e"/><stop offset="1" stop-color="#6c6e70"/></linearGradient></defs>
<rect width="55" height="55" fill="#7b7878"/>
<ellipse cx="28" cy="27" rx="25" ry="29" fill="url(#pga5)"/>
<path d="M6 55 Q9 47 20 43.500 L36 43.500 Q47 47 50 55 Z" fill="url(#pja5)" stroke="#3c3c3e" stroke-width=".7"/>
<path d="M18.500 55 Q17.500 45 20.500 39 L28 48 L35.500 39 Q38.500 45 37.500 55 Z" fill="#55575a" stroke="#222" stroke-width=".7"/><path d="M24.500 47 h7 v8 h-7z" fill="#7d7f82"/>
<ellipse cx="16.800" cy="27" rx="2" ry="4" fill="#b3763c" stroke="#3a2410" stroke-width=".7"/><ellipse cx="40" cy="27" rx="2" ry="4" fill="#93602f" stroke="#3a2410" stroke-width=".7"/>
<path d="M18 17 Q18 7 28 7 Q38.500 7 39 17 L39 30 Q37.500 39.500 29.500 43 Q21 39.500 18.500 30 Z" fill="#dba56b" stroke="#3a2410" stroke-width=".8"/>
<path d="M18.500 29 Q20.500 39 29.500 43 Q26 36.500 26 29 Z" fill="#a86f35" opacity=".55"/><path d="M39 17 L39 30 Q38 36 35 39.500 Q36.500 30 35.500 17 Z" fill="#8a5a2c" opacity=".45"/>
<path d="M17 22 Q12 7 24 2.500 Q35 -1.500 42 7 Q44.500 13 41 21 Q40.500 12 35 9 Q27 15 19.500 18 Z" fill="#7c7e80" stroke="#1a1a1a" stroke-width=".9"/><path d="M17 18.500 Q15 9 23 5 Q20.500 10.500 21.500 15.500 Z" fill="#b4b6b8"/><path d="M24 5 Q30 2.500 36 5.500 M26 8.500 Q32 5.500 39 9.500 M22 11 Q27 8 32 8.500" stroke="#b9bbbd" stroke-width=".9" fill="none"/><path d="M25 12 Q30 8 37 9" stroke="#4a4c4e" stroke-width=".7" fill="none"/>
<path d="M19.500 20.500 Q23 19 27.500 20.500 M30.500 20.500 Q34.500 19 38 20.500" stroke="#2a1a0e" stroke-width="1.300" fill="none"/>
<rect x="19.500" y="22" width="8" height="4.800" rx="1.600" fill="#b9c6cf" stroke="#2b2b2b" stroke-width=".9"/><rect x="30.500" y="22" width="8" height="4.800" rx="1.600" fill="#b9c6cf" stroke="#2b2b2b" stroke-width=".9"/><path d="M27.500 23.800 h3" stroke="#2b2b2b" stroke-width=".8"/><circle cx="23.800" cy="24.500" r="1.500" fill="#1f2c44"/><circle cx="34.500" cy="24.500" r="1.500" fill="#1f2c44"/>
<path d="M22.500 35.800 Q28.500 30 35 35.800 Q28.500 34.300 22.500 35.800 Z" fill="#5c4030" stroke="#4a3023" stroke-width="1.600"/>
<path d="M28 27 L27 31.800 L30.800 31.800" fill="none" stroke="#8a5a2c" stroke-width="1"/><path d="M26 38.500 h6" stroke="#8a5a2c" stroke-width=".8"/>
</svg></div><div class="ib" style="left:67px;top:39px;width:182px;height:58px"></div><div class="t " style="left:117.5px;top:63.62px;line-height:12.5px;font-size:12.5px;font-style:italic;color:#7e8b8b;letter-spacing:-0.414px;">Insert menu text</div><div class="ib" style="left:5px;top:101px;width:244px;height:22px"></div><div class="t " style="left:75.3px;top:106.62px;line-height:12.5px;font-size:12.5px;font-style:italic;color:#7e8b8b;letter-spacing:-0.448px;">Insert stage directions</div><div class="ib" style="left:5px;top:127px;width:244px;height:90px"></div><div class="t " style="left:9.5px;top:131.92px;line-height:12.5px;font-size:12.5px;color:#fff;letter-spacing:-0.268px;">Just the usual side-effect of the narcotic.</div></div>
<div class="pin o l" style="left:35px;top:801.8px"></div><div class="pin d r" style="left:303px;top:801.8px"></div><div class="node" style="left:49px;top:700.8px"><div class="hd" style="background:#7a5a9a"></div><div class="t " style="left:10.5px;top:11.96px;line-height:16px;font-size:16px;color:#fff;letter-spacing:-0.169px;">Dr. Artie Cee</div><svg style="left:226px;top:11px" width="18" height="17" viewBox="0 0 18 17"><path d="M4 9.500 h13 v3.200 h-13 z" fill="#6d88a0" opacity=".75"/><path d="M0.500 0.500 h15 v9.300 h-1.200 l.5 6.200 l-5 -6.200 h-9.300 z" fill="url(#og)"/></svg><div class="pt"><svg width="55" height="55" viewBox="0 0 55 55" style="left:0;top:0">
<defs><radialGradient id="pga6" cx="50%" cy="50%" r="50%"><stop offset="0" stop-color="#8f5fa8"/><stop offset=".55" stop-color="#8a62a0" stop-opacity=".9"/><stop offset="1" stop-color="#7c7878" stop-opacity="0"/></radialGradient>
<linearGradient id="pja6" x1="0" y1="0" x2="0" y2="1"><stop offset="0" stop-color="#9a9c9e"/><stop offset="1" stop-color="#6c6e70"/></linearGradient></defs>
<rect width="55" height="55" fill="#7b7878"/>
<ellipse cx="28" cy="27" rx="25" ry="29" fill="url(#pga6)"/>
<path d="M6 55 Q9 47 20 43.500 L36 43.500 Q47 47 50 55 Z" fill="url(#pja6)" stroke="#3c3c3e" stroke-width=".7"/>
<path d="M18.500 55 Q17.500 45 20.500 39 L28 48 L35.500 39 Q38.500 45 37.500 55 Z" fill="#55575a" stroke="#222" stroke-width=".7"/><path d="M24.500 47 h7 v8 h-7z" fill="#7d7f82"/>
<ellipse cx="16.800" cy="27" rx="2" ry="4" fill="#b3763c" stroke="#3a2410" stroke-width=".7"/><ellipse cx="40" cy="27" rx="2" ry="4" fill="#93602f" stroke="#3a2410" stroke-width=".7"/>
<path d="M18 17 Q18 7 28 7 Q38.500 7 39 17 L39 30 Q37.500 39.500 29.500 43 Q21 39.500 18.500 30 Z" fill="#dba56b" stroke="#3a2410" stroke-width=".8"/>
<path d="M18.500 29 Q20.500 39 29.500 43 Q26 36.500 26 29 Z" fill="#a86f35" opacity=".55"/><path d="M39 17 L39 30 Q38 36 35 39.500 Q36.500 30 35.500 17 Z" fill="#8a5a2c" opacity=".45"/>
<path d="M17 22 Q12 7 24 2.500 Q35 -1.500 42 7 Q44.500 13 41 21 Q40.500 12 35 9 Q27 15 19.500 18 Z" fill="#7c7e80" stroke="#1a1a1a" stroke-width=".9"/><path d="M17 18.500 Q15 9 23 5 Q20.500 10.500 21.500 15.500 Z" fill="#b4b6b8"/><path d="M24 5 Q30 2.500 36 5.500 M26 8.500 Q32 5.500 39 9.500 M22 11 Q27 8 32 8.500" stroke="#b9bbbd" stroke-width=".9" fill="none"/><path d="M25 12 Q30 8 37 9" stroke="#4a4c4e" stroke-width=".7" fill="none"/>
<path d="M19.500 20.500 Q23 19 27.500 20.500 M30.500 20.500 Q34.500 19 38 20.500" stroke="#2a1a0e" stroke-width="1.300" fill="none"/>
<rect x="19.500" y="22" width="8" height="4.800" rx="1.600" fill="#b9c6cf" stroke="#2b2b2b" stroke-width=".9"/><rect x="30.500" y="22" width="8" height="4.800" rx="1.600" fill="#b9c6cf" stroke="#2b2b2b" stroke-width=".9"/><path d="M27.500 23.800 h3" stroke="#2b2b2b" stroke-width=".8"/><circle cx="23.800" cy="24.500" r="1.500" fill="#1f2c44"/><circle cx="34.500" cy="24.500" r="1.500" fill="#1f2c44"/>
<path d="M22.500 35.800 Q28.500 30 35 35.800 Q28.500 34.300 22.500 35.800 Z" fill="#5c4030" stroke="#4a3023" stroke-width="1.600"/>
<path d="M28 27 L27 31.800 L30.800 31.800" fill="none" stroke="#8a5a2c" stroke-width="1"/><path d="M26 38.500 h6" stroke="#8a5a2c" stroke-width=".8"/>
</svg></div><div class="ib" style="left:67px;top:39px;width:182px;height:58px"></div><div class="t " style="left:117.5px;top:63.62px;line-height:12.5px;font-size:12.5px;font-style:italic;color:#7e8b8b;letter-spacing:-0.414px;">Insert menu text</div><div class="ib" style="left:5px;top:101px;width:244px;height:22px"></div><div class="t " style="left:75.3px;top:106.62px;line-height:12.5px;font-size:12.5px;font-style:italic;color:#7e8b8b;letter-spacing:-0.448px;">Insert stage directions</div><div class="ib" style="left:5px;top:127px;width:244px;height:90px"></div><div class="t " style="left:9.5px;top:131.92px;line-height:12.5px;font-size:12.5px;color:#fff;letter-spacing:-0.236px;">Ah, my favorite weirdo. Do you want to</div><div class="t " style="left:9.5px;top:147.72px;line-height:12.5px;font-size:12.5px;color:#fff;letter-spacing:-0.297px;">continue the therapy?</div></div>
<svg style="left:98px;top:845.5px" width="40" height="3" viewBox="0 0 40 3"><path d="M0 2 l1.500 -1.500 l1.500 1.500 l1.500 -1.500 l1.500 1.500 l1.500 -1.500 l1.500 1.500 l1.500 -1.500 l1.500 1.500 l1.500 -1.500 l1.500 1.500 l1.500 -1.500 l1.500 1.500 l1.500 -1.500 l1.500 1.500 l1.500 -1.500 l1.500 1.500 l1.500 -1.500 l1.500 1.500 l1.500 -1.500 l1.500 1.500 l1.500 -1.500 l1.500 1.500 l1.500 -1.500 l1.500 1.500 l1.500 -1.500 l1.500 1.500 " fill="none" stroke="#e0402a" stroke-width=".8"/></svg></div>
<div style="position:absolute;left:990px;top:114px;width:2px;height:926px;background:#f5a21f"></div>
<div style="position:absolute;left:1903px;top:114px;width:2px;height:926px;background:#f5a21f"></div>
<div style="position:absolute;left:966px;top:1039px;width:939px;height:2px;background:#f5a21f"></div>
<div style="position:absolute;left:0px;top:897px;width:1920px;height:121px;background:linear-gradient(90deg,rgba(0,78,92,.9) 0,rgba(0,76,88,.865) 150px,rgba(0,76,88,.795) 500px,rgba(0,74,86,.72) 900px,rgba(0,72,84,.66) 1190px,rgba(0,72,84,.5) 1300px,rgba(0,72,84,.2) 1440px,rgba(0,72,84,0) 1545px)"></div>
<div style="position:absolute;left:82.500px;top:897px;width:940px;height:121px" aria-label="Write living game design documents"><div class="t " style="left:0.0px;top:30.60px;line-height:58px;font-size:58px;color:#fff;letter-spacing:0.144px;-webkit-text-stroke:1.800px #fff;text-shadow:2px 3px 4px rgba(0,0,0,.45);">Write</div><div class="t " style="left:156.0px;top:30.60px;line-height:58px;font-size:58px;color:#fff;letter-spacing:0.138px;-webkit-text-stroke:1.800px #fff;text-shadow:2px 3px 4px rgba(0,0,0,.45);">living</div><div class="t " style="left:304.0px;top:30.60px;line-height:58px;font-size:58px;color:#fff;letter-spacing:-1.148px;-webkit-text-stroke:1.800px #fff;text-shadow:2px 3px 4px rgba(0,0,0,.45);">game</div><div class="t " style="left:460.0px;top:30.60px;line-height:58px;font-size:58px;color:#fff;letter-spacing:-1.070px;-webkit-text-stroke:1.800px #fff;text-shadow:2px 3px 4px rgba(0,0,0,.45);">design</div><div class="t " style="left:641.0px;top:30.60px;line-height:58px;font-size:58px;color:#fff;letter-spacing:0.420px;-webkit-text-stroke:1.800px #fff;text-shadow:2px 3px 4px rgba(0,0,0,.45);">documents</div></div>
</body></html>
